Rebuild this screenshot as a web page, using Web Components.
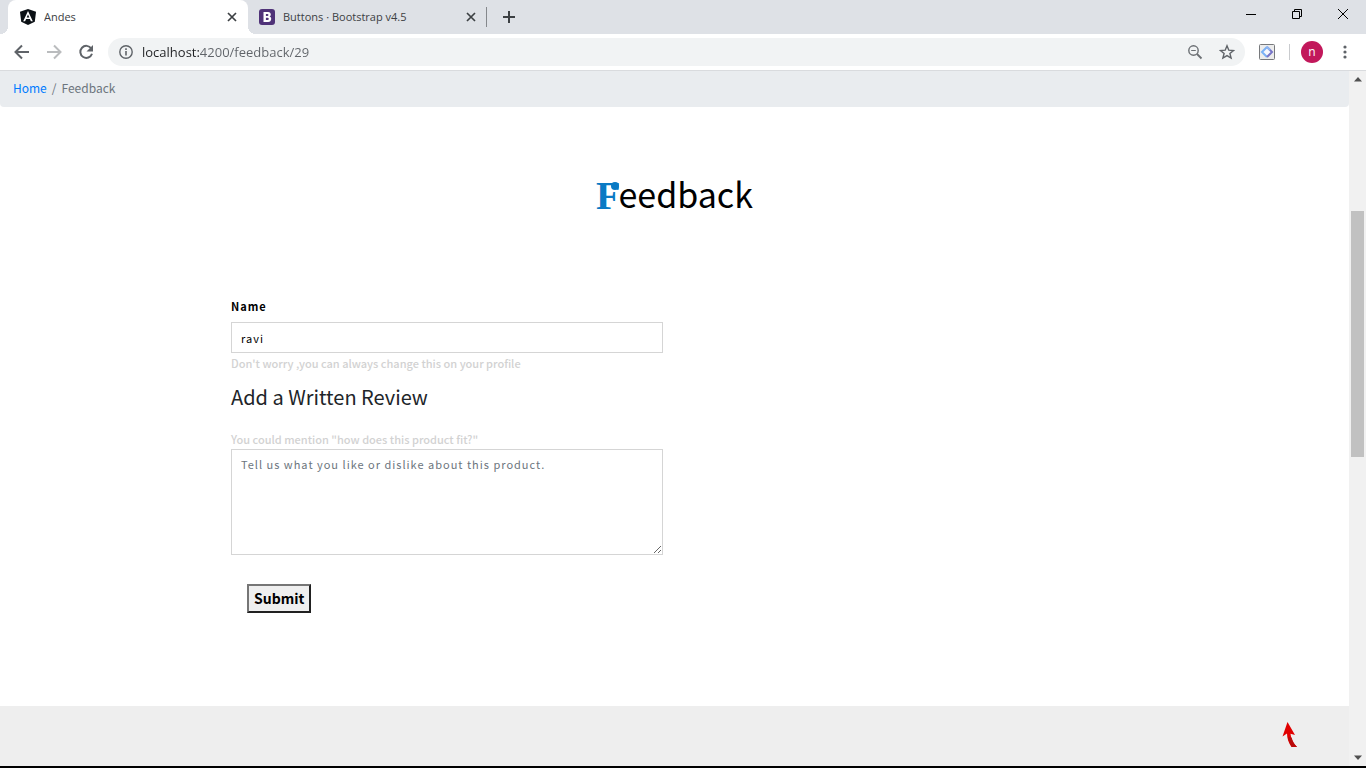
<!DOCTYPE html>
<html lang="en">
<head>
<meta charset="utf-8">
<title>Andes</title>
<style>
  html, body { margin: 0; height: 100%; }
  body { font-family: "Noto Sans CJK SC", "Noto Sans", sans-serif; background: #fff; overflow: hidden; }
</style>
</head>
<body>
<browser-window>
  <browser-tabs slot="tabs">
    <browser-tab active>
      <svg slot="icon" width="16" height="16" viewBox="0 0 16 16"><path d="M8 0l8 2.700-1.200 10L8 16l-6.800-3.300L0 2.700z" fill="#0b1015"/><path d="M8 2L3.200 12.300h1.900l1-2.300h3.800l1 2.300h1.900zM8 5.500L9.300 8.500H6.700z" fill="#fff" fill-rule="evenodd"/></svg>
      Andes
    </browser-tab>
    <browser-tab>
      <svg slot="icon" width="16" height="16" viewBox="0 0 16 16"><rect width="16" height="16" rx="3" fill="#4f3278"/><path d="M4.500 3h4.600c1.700 0 2.700.9 2.700 2.400 0 1-.5 1.700-1.400 2 1.200.3 1.800 1.200 1.800 2.300 0 2-1.200 3.300-3 3.300H4.500zM6.900 4.900v2h1.500c1.400 0 1.400-2 0-2zM6.900 8.700v2.400h1.700c1.600 0 1.600-2.400 0-2.400z" fill="#fff" fill-rule="evenodd"/></svg>
      Buttons · Bootstrap v4.5
    </browser-tab>
  </browser-tabs>
  <browser-toolbar slot="toolbar"></browser-toolbar>
  <feedback-page></feedback-page>
</browser-window>

<script>
function define(name, html) {
  const template = document.createElement('template');
  template.innerHTML = html;
  customElements.define(name, class extends HTMLElement {
    constructor() {
      super();
      this.attachShadow({ mode: 'open' }).append(template.content.cloneNode(true));
    }
  });
}

define('browser-tab', `
<style>
  :host { display: flex; align-items: center; box-sizing: border-box; flex: 0 1 239px; min-width: 0; height: 34px; padding: 0 11px; gap: 8px; position: relative; font: 11px/16px "Open Sans", sans-serif; color: #3c4043; }
  :host([active]) { flex-basis: 240px; padding-left: 12px; background: #fff; border-radius: 8px 8px 0 0; }
  :host([active])::before, :host([active])::after { content: ""; position: absolute; bottom: 0; width: 8px; height: 8px; }
  :host([active])::before { left: -8px; background: radial-gradient(circle at 0 0, transparent 8px, #fff 8px); }
  :host([active])::after { right: -8px; background: radial-gradient(circle at 100% 0, transparent 8px, #fff 8px); }
  ::slotted(svg) { display: block; }
  span { flex: 1; overflow: hidden; white-space: nowrap; }
  button { display: flex; border: 0; padding: 0; background: none; }
</style>
<slot name="icon"></slot><span><slot></slot></span>
<button aria-label="Close tab"><svg width="10" height="10" viewBox="0 0 10 10"><path d="M1 1l8 8M9 1L1 9" stroke="#3c4043" stroke-width="1.700"/></svg></button>
`);

define('browser-tabs', `
<style>
  :host { display: flex; height: 34px; background: #dee1e6; padding-left: 8px; }
  .new { display: flex; align-items: center; border: 0; border-left: 1px solid #85888c; background: none; height: 20px; margin-top: 7px; padding: 0 16px; margin-left: -1px; }
  .win { display: flex; margin-left: auto; padding-top: 8px; }
  .win button { display: flex; justify-content: center; width: 46px; border: 0; padding: 0; background: none; }
</style>
<slot></slot>
<button class="new" aria-label="New tab"><svg width="12" height="12" viewBox="0 0 12 12"><path d="M6 0v12M0 6h12" stroke="#3c4043" stroke-width="2"/></svg></button>
<div class="win">
  <button aria-label="Minimize"><svg width="12" height="12" viewBox="0 0 12 12"><path d="M1 6.500h10" stroke="#000"/></svg></button>
  <button aria-label="Restore"><svg width="12" height="12" viewBox="0 0 12 12"><path d="M1.500 3.500h7v7h-7zM3.500 3V1.500h7v7H9" fill="none" stroke="#000"/></svg></button>
  <button aria-label="Close"><svg width="12" height="12" viewBox="0 0 12 12"><path d="M1 1l10 10M11 1L1 11" stroke="#000"/></svg></button>
</div>
`);

define('browser-toolbar', `
<style>
  :host { display: flex; align-items: center; box-sizing: border-box; height: 37px; border-bottom: 1px solid #d9dbde; background: #fff; padding: 0 13px 0 6px; }
  svg { display: block; }
  button { display: flex; border: 0; padding: 0; background: none; }
  .nav { width: 32px; justify-content: center; }
  .address { flex: 1; display: flex; align-items: center; height: 28px; border-radius: 14px; background: #f1f3f4; margin-left: 6px; padding: 0 10px; gap: 8px; }
  input { flex: 1; min-width: 0; border: 0; outline: 0; padding: 0; height: 20px; font: 13px/20px "Open Sans", sans-serif; color: #5f6368; -webkit-text-fill-color: transparent; background: linear-gradient(to right, #202124 57px, #5f6368 57px); -webkit-background-clip: text; background-clip: text; }
  .star { margin-left: 8px; }
  .ext { margin-left: 14px; }
  hr { width: 1px; height: 16px; border: 0; margin: 0 11px 0 14px; background: #c9cbce; }
  .avatar { width: 22px; height: 22px; border-radius: 50%; background: #c2185b; color: #fff; font: 12px/20px "Open Sans", sans-serif; align-items: center; justify-content: center; margin-right: 20px; }
  .menu { padding-right: 6px; }
</style>
<button class="nav" aria-label="Back"><svg width="16" height="16" viewBox="0 0 16 16"><path d="M15 8H2M8 1.500L1.500 8 8 14.500" fill="none" stroke="#5f6368" stroke-width="2"/></svg></button>
<button class="nav" aria-label="Forward"><svg width="16" height="16" viewBox="0 0 16 16"><path d="M1 8h13M8 1.500L14.500 8 8 14.500" fill="none" stroke="#babcbe" stroke-width="2"/></svg></button>
<button class="nav" aria-label="Reload"><svg width="16" height="16" viewBox="0 0 16 16"><path d="M13.300 4.500A6 6 0 1 0 14 9.800" fill="none" stroke="#5f6368" stroke-width="2"/><path d="M15 1v6.500H8.500z" fill="#5f6368"/></svg></button>
<div class="address">
  <svg width="16" height="16" viewBox="0 0 16 16"><circle cx="8" cy="8" r="6.200" fill="none" stroke="#5f6368" stroke-width="1.400"/><path d="M8 7v4.500M8 4.300V6" stroke="#5f6368" stroke-width="1.600"/></svg>
  <input type="text" aria-label="Address" value="localhost:4200/feedback/29">
  <button aria-label="Zoom"><svg width="16" height="16" viewBox="0 0 16 16"><circle cx="6.500" cy="6.500" r="4.700" fill="none" stroke="#6b6f73" stroke-width="1.400"/><path d="M10 10l4.500 4.500" stroke="#6b6f73" stroke-width="1.800"/><path d="M4.200 6.500h4.600" stroke="#6b6f73"/></svg></button>
  <button class="star" aria-label="Bookmark"><svg width="16" height="16" viewBox="0 0 16 16"><path d="M8 1.800l1.800 4.400 4.700.3-3.600 3 1.200 4.600L8 11.600l-4.100 2.500 1.200-4.600-3.600-3 4.700-.3z" fill="none" stroke="#5f6368" stroke-width="1.400"/></svg></button>
</div>
<button class="ext" aria-label="Extension"><svg width="16" height="16" viewBox="0 0 16 16"><rect x=".5" y=".5" width="15" height="15" rx="1" fill="#ececec" stroke="#77797c"/><path d="M8 13L3 8 8 3" fill="#f5f7fd" stroke="#7ab1f5" stroke-width="2"/><path d="M8 3L13 8 8 13" fill="#f5f7fd" stroke="#7775c7" stroke-width="2"/><path d="M7.500 2.500L11 6" stroke="#8eb8f4" stroke-width="2"/></svg></button>
<hr>
<button class="avatar" aria-label="Profile">n</button>
<button class="menu" aria-label="Menu"><svg width="4" height="14" viewBox="0 0 4 14"><g fill="#5f6368"><circle cx="2" cy="2" r="1.600"/><circle cx="2" cy="7" r="1.600"/><circle cx="2" cy="12" r="1.600"/></g></svg></button>
`);

define('page-scrollbar', `
<style>
  :host { display: flex; flex-direction: column; align-items: center; width: 17px; background: #f1f1f1; }
  svg { display: block; margin: 6px 0; }
  .track { flex: 1; align-self: stretch; display: grid; grid-template-rows: 123fr 247fr 292fr; padding: 0 2px; }
  .thumb { grid-row: 2; background: #c1c1c1; width: 13px; }
</style>
<svg width="8" height="5" viewBox="0 0 8 5"><path d="M4 0l4 4.500H0z" fill="#505050"/></svg>
<div class="track"><div class="thumb"></div></div>
<svg width="8" height="5" viewBox="0 0 8 5"><path d="M4 5l4-4.500H0z" fill="#505050"/></svg>
`);

define('browser-window', `
<style>
  :host { display: flex; flex-direction: column; box-sizing: border-box; height: 100vh; border-bottom: 2px solid #000; }
  .view { flex: 1; min-height: 0; display: flex; }
  main { flex: 1; min-width: 0; display: flex; overflow: hidden; }
</style>
<slot name="tabs"></slot><slot name="toolbar"></slot>
<div class="view"><main><slot></slot></main><page-scrollbar></page-scrollbar></div>
`);

define('feedback-form', `
<style>
  :host { display: grid; grid-template-columns: 231fr 432fr 686fr; padding: 77px 0 93px; font-size: 11px; line-height: 20px; color: #000; }
  form { grid-column: 2; display: flex; flex-direction: column; min-width: 0; }
  .name { font-weight: 700; letter-spacing: 1px; margin-bottom: 6px; }
  input, textarea { display: block; box-sizing: border-box; width: 100%; margin: 0; border: 1px solid #d5d5d5; border-radius: 0; outline: 0; background: #fff; font: inherit; color: #000; letter-spacing: 1px; padding: 4px 9px; }
  input { height: 31px; }
  textarea { height: 106px; }
  textarea::placeholder { color: #6c757d; opacity: 1; }
  .hint { color: #d2d2d2; font-weight: 500; white-space: nowrap; }
  h2 { margin: 8px 0 16px; font-size: 20px; line-height: 32px; font-weight: 400; color: #212529; }
  button { align-self: flex-start; margin: 29px 0 0 16px; height: 29px; border: 2px solid; border-color: #767676 #212121 #212121 #767676; background: #efefef; padding: 0 5px 2px; font: 700 14px/22px "Noto Sans CJK SC", sans-serif; color: #000; }
</style>
<form>
  <label class="name" for="name">Name</label>
  <input id="name" type="text" value="ravi">
  <span class="hint">Don't worry ,you can always change this on your profile</span>
  <h2>Add a Written Review</h2>
  <label class="hint" for="review">You could mention "how does this product fit?"</label>
  <textarea id="review" placeholder="Tell us what you like or dislike about this product."></textarea>
  <button type="button">Submit</button>
</form>
`);

define('feedback-page', `
<style>
  :host { display: flex; flex-direction: column; flex: 1; min-width: 0; color: #000; }
  nav { display: flex; box-sizing: border-box; height: 36px; padding: 7px 13px; border-radius: 0 0 4px 4px; background: #e9ecef; font-size: 12px; line-height: 20px; color: #6c757d; }
  a { color: #007bff; text-decoration: none; }
  .sep { padding: 0 5px; }
  h1 { display: flex; justify-content: center; height: 48px; margin: 64px 0 0; font-size: 34px; line-height: 46px; font-weight: 400; }
  .cap { position: relative; margin-right: -2px; font: 700 40px/50px "Liberation Serif", serif; color: #0a7ac4; }
  .cap::after { content: ""; position: absolute; right: 1px; top: 11px; width: 8px; height: 8px; border-radius: 50%; background: #0a7ac4; }
  footer { flex: 1; position: relative; background: #eee; }
  .pointer { position: absolute; right: 51px; top: 16px; }
</style>
<nav aria-label="Breadcrumb"><a href="#">Home</a><span class="sep">/</span><span>Feedback</span></nav>
<h1><span class="cap">F</span>eedback</h1>
<feedback-form></feedback-form>
<footer><svg class="pointer" width="16" height="26" viewBox="0 0 16 26"><path d="M5.500 0L13 13l-4.500-1.200C9 17 11 21 15 25H9.500C6.500 21 5 16 5 11.500L.5 14.500z" fill="#e00000"/><path d="M6 15c.8 4 2 7.500 4 10h5c-3-3-4.500-6-5.400-9.500z" fill="#b90a0a"/></svg></footer>
`);
</script>
</body>
</html>
